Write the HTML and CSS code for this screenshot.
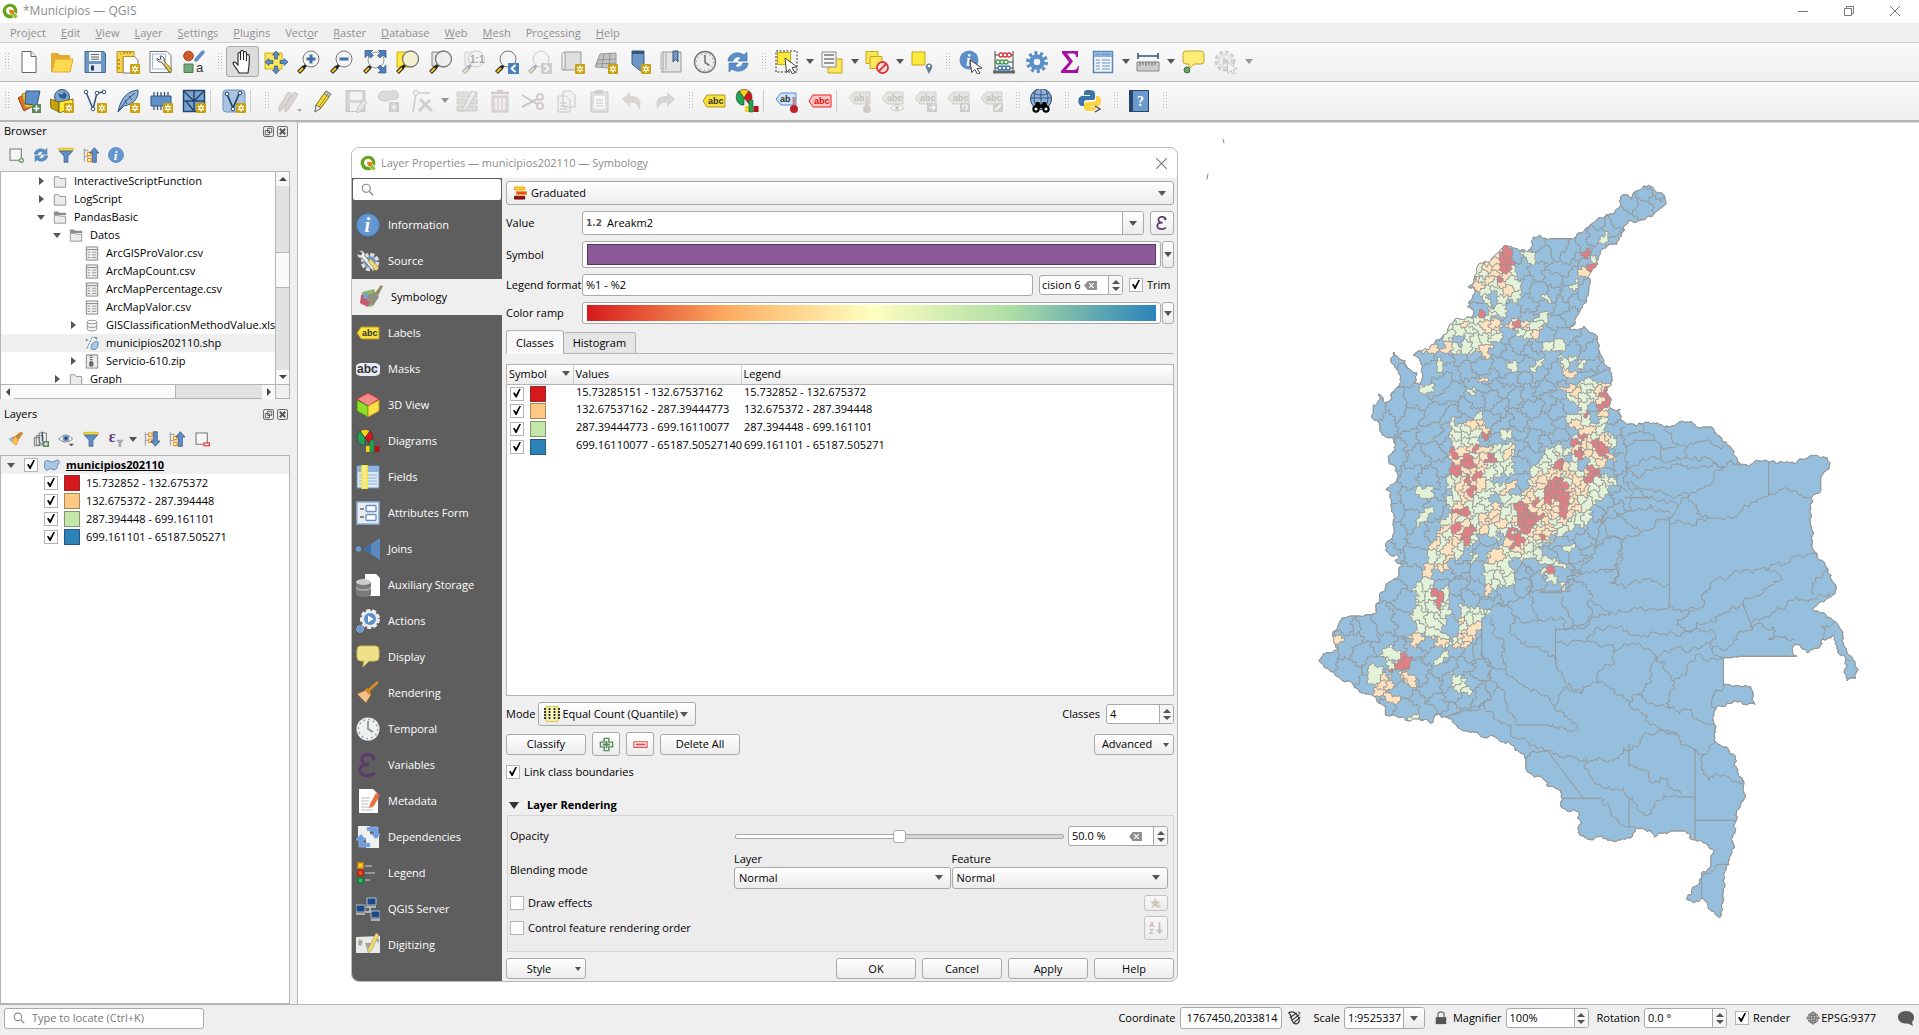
FILE: index.html
```html
<!DOCTYPE html>
<html lang="en">
<head>
<meta charset="utf-8">
<title>*Municipios — QGIS</title>
<link rel="stylesheet" href="styles.css">
</head>
<body>
<svg class="defs" aria-hidden="true">
<defs>
<g id="star"><rect x="14" y="14" width="10" height="10" rx="1" fill="#c8a20c"/><path d="M19 15.500v7M16 17.200l6 3.600M22 17.200l-6 3.600" stroke="#fff" stroke-width="1.500"/><circle cx="19" cy="19" r="1" fill="#c8a20c"/></g>
<g id="lens"><path d="M9 15l-3 3" stroke="#222" stroke-width="3"/><path d="M7 17l-5.500 5.500" stroke="#222" stroke-width="4"/><path d="M6 18l-4 4" stroke="#f6c21c" stroke-width="2.200"/></g>
<symbol id="qgis" viewBox="0 0 24 24"><path d="M12 1a11 11 0 1 0 5 20.800l-3.500-4.300A6 6 0 1 1 18 12.500l4 4A11 11 0 0 0 12 1z" fill="#66a41c"/><path d="M11 11l4 0 8.500 9-3.500 3.500-8-8z" fill="#97c13c"/><path d="M11 10h5l3 4-4 3-4-3z" fill="#ee7913"/></symbol>
<symbol id="new" viewBox="0 0 24 24"><path d="M5 1.500h9l5 5v16H5z" fill="#fff" stroke="#666"/><path d="M14 1.500v5h5" fill="#eee" stroke="#666"/></symbol>
<symbol id="open" viewBox="0 0 24 24"><path d="M1 3h7l2 2h10v17H1z" fill="#e3ab30"/><path d="M5 9h18l-3 13H2z" fill="#ffd94f" stroke="#e0a82f"/></symbol>
<symbol id="save" viewBox="0 0 24 24"><path d="M2 1.500h19l1.500 2v19H2z" fill="#6d97c4" stroke="#456a94"/><path d="M6 2h12v9H6z" fill="#f3f3f3"/><path d="M8 4.500h8M8 7h8M8 9.200h8" stroke="#666"/><path d="M6 14h12v8H6z" fill="#e4e9ee"/><path d="M8 15.500h3v5H8z" fill="#1f3e63"/></symbol>
<symbol id="layout" viewBox="0 0 24 24"><path d="M7 6h11l4 4v13H7z" fill="#fff" stroke="#777"/><path d="M1 1.500h17v5H7v16H1z" fill="#f8d24c" stroke="#b8941f"/><path d="M4 4h1M8 2v2M11 2v2M14 2v2M1 10h3M1 14h3M1 18h3" stroke="#8a6d10"/><use href="#star"/></symbol>
<symbol id="manager" viewBox="0 0 24 24"><path d="M1 1.500h17l4 4v17H1z" fill="#fff" stroke="#777"/><path d="M3.500 4h13v15h-13z" fill="#fff" stroke="#9ab8dd"/><path d="M8 8c0 4 3 4.500 4.500 4L20 22l3-2-8-9c1-3-1-5-4-5l1 3-2 1z" fill="#e9e9e9" stroke="#555"/><path d="M15 14l6 8 2-1.500-6-8z" fill="#e4c542" stroke="#9b8216" stroke-width=".6"/></symbol>
<symbol id="styles" viewBox="0 0 24 24"><circle cx="6.500" cy="6" r="4.800" fill="#d15b2e" stroke="#a8421b"/><path d="M14 10l7-8" stroke="#5f8cc0" stroke-width="3.500" stroke-linecap="round"/><path d="M2 14h9v8.500H2z" fill="#72a878" stroke="#4a7d50"/><text x="14" y="22" font-size="13" fill="#333">a</text></symbol>
<symbol id="hand" viewBox="0 0 24 24"><path d="M8 23c-1-4-6-7-6-10 1.500-2 3 0 5 2V4c0-2 2.500-2 2.500 0v6-8c0-2 3-2 3 0v8-7c0-2 3-2 3 0v8-5c0-2 2.800-2 2.800 0C18.500 13 18 18 17 23z" fill="#fff" stroke="#222" stroke-width="1.100"/></symbol>
<symbol id="pansel" viewBox="0 0 24 24"><path d="M1 3h17v16H1z" fill="#fbe75c" stroke="#cfae0c"/><path d="M12 1l3.500 4h-2v4h-3V5h-2zM12 24l3.500-4h-2v-4h-3v4h-2zM1 12l4-3.500v2h4v3H5v2zM24 12l-4-3.500v2h-4v3h4v2z" fill="#5d8fc6" stroke="#2c517e" stroke-width=".7"/></symbol>
<symbol id="zin" viewBox="0 0 24 24"><use href="#lens"/><circle cx="14" cy="9" r="8" fill="#f4f4f2" stroke="#777"/><path d="M14 4.500v9M9.500 9h9" stroke="#3d6ea8" stroke-width="3"/></symbol>
<symbol id="zout" viewBox="0 0 24 24"><use href="#lens"/><circle cx="14" cy="9" r="8" fill="#f4f4f2" stroke="#777"/><path d="M9.500 9h9" stroke="#3d6ea8" stroke-width="3"/></symbol>
<symbol id="zfull" viewBox="0 0 24 24"><use href="#lens"/><circle cx="13" cy="10" r="8" fill="#f4f4f2" stroke="#999"/><path d="M2 0h8L7.500 2.500l3 3-3 2.500-3-3L2 8zM23 0h-8l2.500 2.500-3 3L17 8l3-3 3 3zM23 23h-8l2.500-2.500-3-3L17 15l3 3 3-3z" fill="#4b7fba" stroke="#2c517e" stroke-width=".6"/></symbol>
<symbol id="zsel" viewBox="0 0 24 24"><path d="M1 2h12v15H1z" fill="#fde93b" stroke="#cfae0c"/><use href="#lens"/><circle cx="14.500" cy="9" r="8" fill="#f5f0cf" stroke="#777" stroke-width="1.300"/></symbol>
<symbol id="zlay" viewBox="0 0 24 24"><path d="M3 2h10v14H3z" fill="#e3e3e3" stroke="#888"/><use href="#lens"/><circle cx="14.500" cy="9" r="8" fill="#eee" fill-opacity=".9" stroke="#777" stroke-width="1.300"/></symbol>
<symbol id="znat" viewBox="0 0 24 24"><path d="M3 2h10v14H3z" fill="#e3e3e3" stroke="#888"/><use href="#lens"/><circle cx="14.500" cy="9" r="8" fill="#eee" stroke="#777"/><text x="8" y="13" font-size="10" font-weight="700">1:1</text></symbol>
<symbol id="zlast" viewBox="0 0 24 24"><use href="#lens"/><circle cx="13" cy="9" r="8" fill="#f4f4f2" stroke="#777"/><path d="M13 13h11v11H13z" fill="#4b7fba"/><path d="M20.500 15l-4 3.500 4 3.500" fill="none" stroke="#fff" stroke-width="1.800"/></symbol>
<symbol id="znext" viewBox="0 0 24 24"><use href="#lens"/><circle cx="13" cy="9" r="8" fill="#f4f4f2" stroke="#777"/><path d="M13 13h11v11H13z" fill="#888"/><path d="M16.500 15l4 3.500-4 3.500" fill="none" stroke="#fff" stroke-width="1.800"/></symbol>
<symbol id="nmap" viewBox="0 0 24 24"><path d="M4 2h16v18H2c2 0 2-1 2-3z" fill="#dedede" stroke="#999"/><path d="M4 2c-3 0-3 2-3 3v15" fill="none" stroke="#999"/><use href="#star"/></symbol>
<symbol id="n3d" viewBox="0 0 24 24"><path d="M6 4l16-1v13l-7 2-14-1z" fill="#c4c4c4" stroke="#999"/><path d="M4 10l18-1M10 4L8 17M16 3l-1 14M2 14l20-1" fill="none" stroke="#888" stroke-width=".8"/><use href="#star"/></symbol>
<symbol id="bookn" viewBox="0 0 24 24"><path d="M5 1h12v22l-6-4-6-5z" fill="#6d97c4" stroke="#3c5f88"/><path d="M5 1h12v3H5z" fill="#37557a"/><use href="#star"/></symbol>
<symbol id="book" viewBox="0 0 24 24"><path d="M3 2h18v20H1c2-1 2-1 2-3z" fill="#e4e4e4" stroke="#999"/><path d="M3 2C1 2 1 4 1 6v14M6 2v18" fill="none" stroke="#aaa"/><path d="M13 1h5v11l-2.500-3L13 12z" fill="#6d97c4" stroke="#37557a"/></symbol>
<symbol id="clock" viewBox="0 0 24 24"><circle cx="12" cy="12" r="10.500" fill="#ededed" stroke="#777" stroke-width="1.400"/><circle cx="12" cy="12" r="8.500" fill="none" stroke="#888" stroke-width="1.200" stroke-dasharray="1 3.450"/><path d="M12 5v7.500l4.500 3" fill="none" stroke="#777" stroke-width="1.600"/></symbol>
<symbol id="refresh" viewBox="0 0 24 24"><path d="M2 11C2 4 12 0 18 5l3-3v9h-9l3-3c-4-3-7 0-8 3zM22 13c0 7-10 11-16 6l-3 3v-9h9l-3 3c4 3 7 0 8-3z" fill="#5a8fc8" stroke="#3a6ca3" stroke-width=".6"/></symbol>
<symbol id="sel" viewBox="0 0 24 24"><path d="M1 1h21v21H1z" fill="none" stroke="#333" stroke-dasharray="2 1.500"/><path d="M2.500 2.500h13v12h-13z" fill="#fbe93b" stroke="#c9a70c"/><path d="M10 8l12 9-5 .5 3 5-2.500 1.500-3-5-3 3.500z" fill="#fff" stroke="#444"/></symbol>
<symbol id="self" viewBox="0 0 24 24"><path d="M8 9h14v14H8z" fill="#fbe75c" stroke="#c9a70c"/><path d="M2 2h14v15H2z" fill="#f6f6f6" stroke="#888"/><path d="M4 5h10M4 9h10M4 13h10" stroke="#777" stroke-width="1.500"/></symbol>
<symbol id="desel" viewBox="0 0 24 24"><path d="M1 1.500h12v12H1z" fill="#fbe75c" stroke="#c9a70c"/><path d="M5 6.500h12v12H5z" fill="#fbe75c" stroke="#c9a70c"/><circle cx="17.500" cy="17.500" r="5.500" fill="#fbe0e0" stroke="#d9363c" stroke-width="1.800"/><path d="M14 21l7-7" stroke="#d9363c" stroke-width="1.800"/></symbol>
<symbol id="selloc" viewBox="0 0 24 24"><path d="M2 2h13v13H2z" fill="#fbe93b" stroke="#c9a70c"/><path d="M19 24l-3-6c-2-6 8-6 6 0z" fill="#5f7f9c"/><circle cx="19" cy="16" r="1.300" fill="#fff"/></symbol>
<symbol id="ident" viewBox="0 0 24 24"><circle cx="10" cy="10" r="9.500" fill="#5f8fc8"/><text x="7" y="16" font-size="16" font-weight="700" font-style="italic" fill="#fff" class="serif">i</text><path d="M11 10l12 8-5 .5 3 4.500-2.300 1.300-3-5-3 3.300z" fill="#fff" stroke="#444"/></symbol>
<symbol id="abacus" viewBox="0 0 24 24"><path d="M3 1v20M21 1v20M3 5h18M3 12h18M3 18h18" stroke="#444"/><path d="M1 22h22" stroke="#666" stroke-width="3"/><g fill="#fff" stroke-width="1.300"><g stroke="#d9363c"><circle cx="9" cy="5" r="2"/><circle cx="13" cy="5" r="2"/><circle cx="17" cy="5" r="2"/></g><g stroke="#469a50"><circle cx="6" cy="12" r="2"/><circle cx="10" cy="12" r="2"/><circle cx="14" cy="12" r="2"/></g><g stroke="#3d74b5"><circle cx="8" cy="18" r="2"/><circle cx="12" cy="18" r="2"/><circle cx="16" cy="18" r="2"/></g></g></symbol>
<symbol id="gear" viewBox="0 0 24 24"><circle cx="12" cy="12" r="9" fill="none" stroke="#5a8fc8" stroke-width="4" stroke-dasharray="3 2.650"/><circle cx="12" cy="12" r="5.500" fill="none" stroke="#5a8fc8" stroke-width="4.500"/></symbol>
<symbol id="sigma" viewBox="0 0 24 24"><path d="M4 1h16v6h-2c0-3-1-3.500-4-3.500H9l6 8L8 20h7c3 0 4-1 5-4h1l-1 7H3v-2l8-9-7-9z" fill="#a50fa5"/></symbol>
<symbol id="table" viewBox="0 0 24 24"><path d="M2.500 1.500h19v21h-19z" fill="#f0f4f8" stroke="#5c88b8" stroke-width="1.500"/><path d="M3 2h18v5H3z" fill="#8db3dc"/><path d="M5 4.500h4M11 4.500h8M5 10h4M11 10h8M5 13h4M11 13h8M5 16h4M11 16h8M5 19h4M11 19h8" stroke="#6b94c2"/></symbol>
<symbol id="measure" viewBox="0 0 24 24"><path d="M2 6h20M2 3v6M22 3v6" stroke="#37557a" stroke-width="1.500"/><path d="M1 12h22v9H1z" fill="#ccc" stroke="#888"/><path d="M4 12v4M7 12v3M10 12v4M13 12v3M16 12v4M19 12v3" stroke="#666"/></symbol>
<symbol id="tip" viewBox="0 0 24 24"><path d="M5 1h15q3 0 3 3v7q0 3-3 3h-7l-5 5v-5H5q-3 0-3-3V4q0-3 3-3z" fill="#fdec75" stroke="#c2a52b"/><circle cx="6" cy="20" r="3" fill="#6da06f" stroke="#3f7142"/></symbol>
<symbol id="run" viewBox="0 0 24 24"><circle cx="11" cy="11" r="9" fill="none" stroke="#888" stroke-width="3" stroke-dasharray="4 2"/><circle cx="11" cy="11" r="6.500" fill="#ddd" stroke="#888"/><path d="M9 7l6 4-6 4z" fill="#888"/><path d="M13 12l10 7-4 .5 2 4-2 1-2-4-3 3z" fill="#fff" stroke="#666"/></symbol>
<symbol id="dsm" viewBox="0 0 24 24"><path d="M1 9l9-5 6 13-9 5z" fill="#df6a2c" stroke="#a8421b"/><path d="M5 5l10-2 3 14-10 2z" fill="#f1c52e" stroke="#b08c14"/><path d="M9 2l14 0-3 14-12-1z" fill="#5f8fc8" stroke="#37557a"/><path d="M15 15h9v9h-9z" fill="#578a5c"/><path d="M19.500 16.500v6M16.500 19.500h6" stroke="#fff" stroke-width="1.600"/></symbol>
<symbol id="gpkg" viewBox="0 0 24 24"><circle cx="12" cy="8" r="7.500" fill="#7ba3d0" stroke="#37557a"/><path d="M8 4l4 2 2-3 3 3-2 4-5-1z" fill="#2f5a8c"/><path d="M0 10l9 3v10l-8-4z" fill="#c8a20c" stroke="#6b5605" stroke-width=".8"/><path d="M9 13l14-3v9l-14 5z" fill="#fbe93b" stroke="#6b5605" stroke-width=".8"/><use href="#star"/></symbol>
<symbol id="shp" viewBox="0 0 24 24"><path d="M3 3l7 17 4-16 7-1" fill="none" stroke="#37557a" stroke-width="1.500"/><g fill="#fff" stroke="#37557a"><circle cx="3" cy="3" r="1.800"/><circle cx="10" cy="20" r="1.800"/><circle cx="14" cy="4" r="1.800"/><circle cx="21" cy="3" r="1.800"/></g><use href="#star"/></symbol>
<symbol id="feather" viewBox="0 0 24 24"><path d="M2 23C5 8 12 2 22 1c1 9-5 14-14 16z" fill="#8fb2da" stroke="#37557a"/><path d="M2 23C7 15 12 9 19 4M9 11l2 4M13 7l3 4" fill="none" stroke="#37557a"/><use href="#star"/></symbol>
<symbol id="chip" viewBox="0 0 24 24"><path d="M5 3v18M8.500 3v18M12 3v18M15.500 3v18M19 3v18" stroke="#37557a" stroke-width="1.300"/><path d="M2 7h20v10H2z" fill="#5f8fc8" stroke="#37557a"/><use href="#star"/></symbol>
<symbol id="mesh" viewBox="0 0 24 24"><path d="M1.500 1.500h21v21h-21z" fill="#7ba3d0" stroke="#26456b" stroke-width="1.500"/><path d="M1.500 12h21M12 1.500v21M1.500 2L12 12 22 2M4 12l8 10" fill="none" stroke="#26456b" stroke-width="1.500"/><use href="#star"/></symbol>
<symbol id="virt" viewBox="0 0 24 24"><rect x="1" y="1" width="22" height="22" rx="3" fill="#a9c4e2" stroke="#6d93bd"/><path d="M5 5l6 14 6-14" fill="none" stroke="#26456b" stroke-width="1.800"/><g fill="#fff" stroke="#26456b"><circle cx="5" cy="5" r="1.800"/><circle cx="11" cy="20" r="1.800"/><circle cx="18" cy="4" r="1.800"/></g><use href="#star"/></symbol>
<symbol id="pencil" viewBox="0 0 24 24"><path d="M5 16L15 2l5 3-10 14-6 4z" fill="#f2da3c" stroke="#7d6b10"/><path d="M5 16l5 3-6 4z" fill="#eee" stroke="#555" stroke-width=".7"/><path d="M15 2l5 3-2 3-5-3z" fill="#bbb" stroke="#777" stroke-width=".6"/><path d="M17 5L8 18" stroke="#a08c1c"/></symbol>
<symbol id="pencils" viewBox="0 0 24 24"><path d="M1 18L10 3l4 2-9 15-4 3zM7 18l9-15 4 2-9 15-4 3z" fill="#b49a8f" stroke="#777"/><path d="M19 20h5l-2.500 3z" fill="#222"/></symbol>
<symbol id="savee" viewBox="0 0 24 24"><path d="M2 1.500h19v21H2z" fill="#999" stroke="#777"/><path d="M6 3h12v8H6zM6 14h10v8H6z" fill="#eee"/><path d="M13 20l6-9 4 2-6 9-4 2z" fill="#ccc" stroke="#777"/></symbol>
<symbol id="blob" viewBox="0 0 24 24"><path d="M2 5c3-5 8-1 12-3 5-2 9 3 7 7-2 3-5 0-9 2-5 3-13 0-10-6z" fill="#aaa" stroke="#777"/><rect x="12" y="13" width="10" height="10" fill="#888"/><path d="M17 14v8M14 16l6 4M20 16l-6 4" stroke="#fff"/></symbol>
<symbol id="vertex" viewBox="0 0 24 24"><path d="M3 23L6 4M6 4h14" stroke="#777" stroke-width="1.500"/><circle cx="6" cy="4" r="2.500" fill="#eee" stroke="#777"/><path d="M9 22l11-11M10 10l12 12" stroke="#998f77" stroke-width="3"/></symbol>
<symbol id="multi" viewBox="0 0 24 24"><path d="M2 3h20v5H2zM2 10h20v5H2zM2 17h20v5H2z" fill="#b9b98f" stroke="#888"/><path d="M8 19L17 2l4 2-9 16-5 3z" fill="#ddd" stroke="#777"/></symbol>
<symbol id="trash" viewBox="0 0 24 24"><path d="M3 4h18M9 2h6" stroke="#a77" stroke-width="2.500"/><path d="M4 7h16v16H4z" fill="#c9a0a0" stroke="#a77"/><path d="M8 9v12M12 9v12M16 9v12" stroke="#fff" stroke-width="1.500"/></symbol>
<symbol id="cut" viewBox="0 0 24 24"><path d="M1 6l15 9M1 18l15-8" stroke="#777" stroke-width="2"/><circle cx="19" cy="8" r="3" fill="none" stroke="#a77" stroke-width="2"/><circle cx="19" cy="17" r="3" fill="none" stroke="#a77" stroke-width="2"/></symbol>
<symbol id="copy" viewBox="0 0 24 24"><path d="M9 2h8l4 4v12H9zM4 7h8l4 4v12H4z" fill="#eee" stroke="#777"/><path d="M6 14h7M6 17h7M6 20h7" stroke="#777"/></symbol>
<symbol id="paste" viewBox="0 0 24 24"><path d="M4 3h17v20H4z" fill="#bbb" stroke="#777"/><path d="M7 7h11v13H7z" fill="#fff"/><path d="M8 1h8v4H8z" fill="#888"/><path d="M9 11h7M9 14h7M9 17h7" stroke="#777"/></symbol>
<symbol id="undo" viewBox="0 0 24 24"><path d="M2 10l8-7v4c9-1 13 5 9 14-1-6-4-8-9-7v4z" fill="#b49a8f"/></symbol>
<symbol id="redo" viewBox="0 0 24 24"><path d="M22 10l-8-7v4C5 6 1 12 5 21c1-6 4-8 9-7v4z" fill="#9a9f93"/></symbol>
<symbol id="abc" viewBox="0 0 24 24"><path d="M1 12l4-6h18v12H5z" fill="#f7e23d" stroke="#b8941f"/><text x="6" y="15" font-size="9" font-weight="700" fill="#333">abc</text></symbol>
<symbol id="abcr" viewBox="0 0 24 24"><path d="M1 12l4-6h18v12H5z" fill="#ffc4c4" stroke="#e22"/><text x="6" y="15" font-size="9" font-weight="700" fill="#d11">abc</text></symbol>
<symbol id="abt" viewBox="0 0 24 24"><path d="M1 10l5-6h15v12H6z" fill="#cfe3fa" stroke="#4b8fd8"/><text x="5" y="13" font-size="9" font-weight="700" fill="#333">ab</text><path d="M19 8v10" stroke="#b88" stroke-width="3"/><circle cx="19" cy="20" r="4" fill="#b8242a"/></symbol>
<symbol id="lab" viewBox="0 0 24 24"><path d="M1 9l5-6h16v12H6z" fill="#c9c9a8" stroke="#888"/><text x="6" y="12" font-size="9" font-weight="700" fill="#555">ab</text><path d="M19 7v11" stroke="#a88" stroke-width="3"/><circle cx="19" cy="20" r="4" fill="#a77"/></symbol>
<symbol id="labr" viewBox="0 0 24 24"><path d="M1 9l5-6h16v12H6z" fill="#c9c9a8" stroke="#888"/><text x="6" y="12" font-size="9" font-weight="700" fill="#555">abc</text><path d="M13 14h10v9H13z" fill="#888"/><path d="M16 20c-2-5 6-5 4-1l-2 2" fill="none" stroke="#fff" stroke-width="1.500"/></symbol>
<symbol id="labc" viewBox="0 0 24 24"><path d="M1 9l5-6h16v12H6z" fill="#c9c9a8" stroke="#888"/><text x="6" y="12" font-size="9" font-weight="700" fill="#555">abc</text><path d="M13 14h10v9H13z" fill="#998f77"/><path d="M15 21l6-5" stroke="#fff" stroke-width="2"/></symbol>
<symbol id="labs" viewBox="0 0 24 24"><path d="M1 9l5-6h16v12H6z" fill="#c9c9a8" stroke="#888"/><text x="6" y="12" font-size="9" font-weight="700" fill="#555">abc</text><path d="M13 14h10v9H13z" fill="#888"/><path d="M15 18.500h6M18.500 16l2.500 2.500-2.500 2.500" fill="none" stroke="#fff" stroke-width="1.500"/></symbol>
<symbol id="labe" viewBox="0 0 24 24"><path d="M1 9l5-6h16v12H6z" fill="#c9c9a8" stroke="#888"/><text x="6" y="12" font-size="9" font-weight="700" fill="#555">abc</text><path d="M9 19q7-7 14 0-7 6-14 0z" fill="#fff" stroke="#777"/><circle cx="16" cy="19" r="2" fill="#777"/></symbol>
<symbol id="diag" viewBox="0 0 24 24"><path d="M9 9L4 2a9 9 0 0 1 10 0z" fill="#f6d01c" stroke="#333" stroke-width=".6"/><path d="M9 9l5-7c4 3 4 9 0 13z" fill="#d3191c" stroke="#333" stroke-width=".6"/><path d="M9 9L4 2c-4 3-4 11 2 14l3 0z" fill="#1fa555" stroke="#333" stroke-width=".6"/><path d="M10 17h4v6h-4z" fill="#f6d01c"/><path d="M14 11h4v12h-4z" fill="#1fa555" stroke="#0d6e35" stroke-width=".6"/><path d="M18.500 17h5v6h-5z" fill="#b31217"/></symbol>
<symbol id="meta" viewBox="0 0 24 24"><circle cx="12" cy="10" r="10.500" fill="#8fb2da" stroke="#26456b"/><path d="M2 9h20M12 0v17M4 4q8 4 16 0M7 1q-4 8 0 16M17 1q4 8 0 16" fill="none" stroke="#26456b" stroke-width=".8"/><circle cx="7" cy="20" r="3.700"/><circle cx="17" cy="20" r="3.700"/><path d="M7 13h3l2 3 2-3h3l2 6H5z"/><circle cx="7" cy="20" r="1.500" fill="#fff"/><circle cx="17" cy="20" r="1.500" fill="#fff"/></symbol>
<symbol id="python" viewBox="0 0 24 24"><path d="M11 1c-5 0-5 1-5 5h6v1H4c-5 0-5 9 0 10h2v-3c0-3 2-3 4-3h5c2 0 2-2 2-3V5c0-3-2-4-6-4z" fill="#3d74a8"/><path d="M12 22c5 0 6-1 6-4h-6v-1h8c4-1 4-9 0-10h-2v3c0 3-2 3-4 3H9c-2 0-3 2-3 3v3c0 2 2 3 6 3z" fill="#fcd33f"/><path d="M17 17l5 3-5 3" fill="none" stroke="#444" stroke-width="1.300"/></symbol>
<symbol id="help" viewBox="0 0 24 24"><path d="M2 1h20v22H2z" fill="#26456b"/><path d="M6 2h15v20H6z" fill="#6b99cd"/><text x="10" y="17" font-size="14" font-weight="700" fill="#fff" class="serif">?</text></symbol>
<symbol id="addlay" viewBox="0 0 24 24"><path d="M3 3h17v17H3z" fill="#f6f6f6" stroke="#777" stroke-width="1.600"/><circle cx="20" cy="20" r="4" fill="#6da06f"/><circle cx="20" cy="20" r="1.800" fill="#fff"/></symbol>
<symbol id="remlay" viewBox="0 0 24 24"><path d="M3 3h17v17H3z" fill="#f6f6f6" stroke="#777" stroke-width="1.600"/><path d="M14 17h10v6H14z" fill="#e6484c"/><path d="M16 20h6" stroke="#fff" stroke-width="2"/></symbol>
<symbol id="filter" viewBox="0 0 24 24"><path d="M1 2h22v3H1z" fill="#f7e23d" stroke="#c9a70c"/><path d="M2 6h20l-7 8v9h-6v-9z" fill="#5f8fc8" stroke="#37557a"/></symbol>
<symbol id="coll" viewBox="0 0 24 24"><path d="M2 2v20M2 5h6M2 14h6" stroke="#999" stroke-width="1.500"/><path d="M7 8h5v5H7zM7 17h5v5H7z" fill="#fff" stroke="#ee9313" stroke-width="1.800"/><path d="M17 1l7 8h-4v14h-6V9h-4z" fill="#5f8fc8" stroke="#26456b"/></symbol>
<symbol id="expd" viewBox="0 0 24 24"><path d="M2 2v20M2 5h6M2 14h6" stroke="#999" stroke-width="1.500"/><path d="M7 3h5v5H7zM7 12h5v5H7z" fill="#fff" stroke="#ee9313" stroke-width="1.800"/><path d="M17 23l7-8h-4V1h-6v14h-4z" fill="#5f8fc8" stroke="#26456b"/></symbol>
<symbol id="info" viewBox="0 0 24 24"><circle cx="12" cy="12" r="11.300" fill="#6496d2" stroke="#4a7cb8"/><text x="8.500" y="19" font-size="20" font-weight="700" font-style="italic" fill="#fff" class="serif">i</text></symbol>
<symbol id="brush" viewBox="0 0 24 24"><path d="M1 12l9-4 6 6-4 8z" fill="#ee6e4b"/><path d="M5 14l7-5 3 7-4 5z" fill="#f7c63d"/><path d="M1 12l5-3 2 8z" fill="#79c9ea"/><path d="M10 8l9-7 4 2-7 10z" fill="#c98a31"/></symbol>
<symbol id="group" viewBox="0 0 24 24"><path d="M9 3h11v15H9zM5 7h10v14H5zM2 10h8v12H2z" fill="#f3f3f3" stroke="#666" stroke-width="1.300"/><path d="M14 1v14" stroke="#37557a" stroke-width="2"/><path d="M15 15h9v9h-9z" fill="#578a5c"/><path d="M19.500 16.500v6M16.500 19.500h6" stroke="#fff" stroke-width="1.600"/></symbol>
<symbol id="eye" viewBox="0 0 24 24"><path d="M1 12q11-12 21 0-10 9-21 0z" fill="#fff" stroke="#888" stroke-width="1.500"/><circle cx="12" cy="11" r="5" fill="#6d97c4"/><circle cx="12" cy="11" r="2" fill="#234"/><path d="M16 19h8l-4 4z" fill="#555"/></symbol>
<symbol id="efil" viewBox="0 0 24 24"><text x="1" y="16" font-size="24" font-weight="700" fill="#6b3f7c" class="serif">ε</text><path d="M12 13h12l-4 5v6h-4v-6z" fill="#aaa"/></symbol>
<symbol id="folder" viewBox="0 0 16 16"><path d="M1.500 3V14.500h13V4.500H8L6.500 2.500h-5z" fill="#ececec" stroke="#8d8d8d"/></symbol>
<symbol id="foldero" viewBox="0 0 16 16"><path d="M1 1h5l1 1.500h8V5H1z" fill="#8d8d8d"/><path d="M1.500 5.500v9h13v-8H8L6.500 5.500z" fill="#ececec" stroke="#8d8d8d"/></symbol>
<symbol id="csv" viewBox="0 0 16 16"><path d="M1.500 .5h13v15h-13z" fill="#f2f2f2" stroke="#777"/><path d="M2 3.500h12" stroke="#777"/><path d="M3 6.500h3M8 6.500h5M3 9.500h3M8 9.500h5M3 12.500h3M8 12.500h5" stroke="#888"/></symbol>
<symbol id="db" viewBox="0 0 16 16"><path d="M2.500 4v8c0 3 11 3 11 0V4" fill="#f1f1f1" stroke="#888"/><ellipse cx="8" cy="4" rx="5.500" ry="2" fill="#fff" stroke="#888"/><path d="M2.500 8c0 3 11 3 11 0" fill="none" stroke="#888"/></symbol>
<symbol id="vec" viewBox="0 0 16 16"><path d="M2 14L8 1h5" fill="none" stroke="#5b83ae" stroke-dasharray="3 1"/><path d="M7 12c0-5 8-9 8-5s-1 8-5 8-3-2-3-3z" fill="#a9c8e6" stroke="#5b83ae"/><circle cx="2" cy="4" r="1.200" fill="#5b83ae"/><circle cx="13" cy="2" r="1.200" fill="#5b83ae"/></symbol>
<symbol id="zip" viewBox="0 0 16 16"><path d="M1.500 .5h13v15h-13z" fill="#eee" stroke="#777"/><path d="M7 1v7" stroke="#444" stroke-width="3" stroke-dasharray="1 1"/><path d="M5.500 9h3.500v4H5.500z" fill="#888" stroke="#333"/></symbol>
<symbol id="poly" viewBox="0 0 18 14"><path d="M1 3c2-4 5 0 8 0s6-4 8-1c1 4-2 3-2 6s-3 5-6 3-5 3-7 1C0 9 0 6 1 3z" fill="#a9c8e6" stroke="#5b83ae"/></symbol>
<symbol id="float" viewBox="0 0 12 12"><rect x=".5" y=".5" width="11" height="11" rx="2" fill="none" stroke="#555"/><path d="M5 2.500h4.500V7H5zM2.500 5H7v4.500H2.500z" fill="#eee" stroke="#555"/></symbol>
<symbol id="shut" viewBox="0 0 12 12"><rect x=".5" y=".5" width="11" height="11" rx="2" fill="none" stroke="#555"/><path d="M3 3l6 6M9 3L3 9" stroke="#555" stroke-width="2.200"/></symbol>
<symbol id="mag" viewBox="0 0 16 16"><circle cx="6.500" cy="6.500" r="5" fill="none" stroke="#888" stroke-width="1.400"/><path d="M10.500 10.500l4.500 4.500" stroke="#888" stroke-width="1.600"/></symbol>
<symbol id="source" viewBox="0 0 24 24"><circle cx="14" cy="13" r="7" fill="#6d97c4"/><circle cx="14" cy="13" r="7.500" fill="none" stroke="#ddd" stroke-width="3.500" stroke-dasharray="4 1.900"/><path d="M1 3c3-3 9-1 8 4l10 11-3 3L6 9C3 10 1 7 1 5l4 1 1-2-3-2z" fill="#e9e9e9" stroke="#555" stroke-width=".6"/><path d="M12 12l3-2 8 9-3 3z" fill="#ecd97a" stroke="#8d7b2b" stroke-width=".6"/></symbol>
<symbol id="symb" viewBox="0 0 24 24"><path d="M3 7l12-3 3 8-6 10-10-3z" fill="#8db56a"/><path d="M2 10l7 0 3 6-3 6-8-4z" fill="#c95a74"/><path d="M4 9l5-1 2 5-6 1z" fill="#6fa8cc"/><path d="M9 10l7-3 4 5-6 9-6-6z" fill="#8f9080"/><path d="M16 8l6-8 2 1-5 10z" fill="#9a8a62"/></symbol>
<symbol id="masks" viewBox="0 0 24 24"><rect x="-1" y="6" width="26" height="13" rx="6" fill="#e7e9f5"/><text x="1" y="16" font-size="12" font-weight="700" fill="#333">abc</text></symbol>
<symbol id="cube" viewBox="0 0 24 24"><path d="M12 0l11 6-11 7L1 6z" fill="#f58c8c" stroke="#c33"/><path d="M1 7l11 6v11L1 18z" fill="#8ee02d" stroke="#4a8a10"/><path d="M23 7l-11 6v11l11-6z" fill="#fbe04a" stroke="#b8941f"/></symbol>
<symbol id="fields" viewBox="0 0 24 24"><path d="M1 1h22v22H1z" fill="#dfe8f1" stroke="#6b94c2"/><path d="M1 1h22v6H1z" fill="#8db3dc"/><path d="M3 10h18M3 13h18M3 16h18M3 19h18" stroke="#8db3dc"/><path d="M6 0h5v24H6z" fill="#f6e89a" stroke="#f9ec2b" stroke-width="1.500"/></symbol>
<symbol id="form" viewBox="0 0 24 24"><path d="M1 1h22v22H1z" fill="#e9edf2" stroke="#8db3dc" stroke-width="1.500"/><path d="M4 8h4M4 16h4" stroke="#666" stroke-width="1.500"/><rect x="10" y="4.500" width="10" height="6" rx="1" fill="#fff" stroke="#6b94c2" stroke-width="1.400"/><rect x="10" y="13.500" width="10" height="6" rx="1" fill="#fff" stroke="#6b94c2" stroke-width="1.400"/></symbol>
<symbol id="joins" viewBox="0 0 24 24"><circle cx="2.500" cy="12" r="2.700" fill="#6b99cd"/><path d="M7 12L24 1v22z" fill="#5a8ac0"/><path d="M7 12L15 7v10z" fill="#3f6da3"/></symbol>
<symbol id="aux" viewBox="0 0 24 24"><path d="M9 1h11l4 4v18H9z" fill="#fff"/><path d="M0 9v12c0 4 15 4 15 0V9z" fill="#7a7a7a"/><ellipse cx="7.500" cy="9" rx="7.500" ry="3" fill="#ccc"/><path d="M0 14c0 4 15 4 15 0" fill="none" stroke="#ccc"/></symbol>
<symbol id="act" viewBox="0 0 24 24"><circle cx="14" cy="10" r="8.500" fill="#dfe6ee" stroke="#eee" stroke-width="3" stroke-dasharray="4 2"/><circle cx="14" cy="10" r="6" fill="#5f8fc8"/><path d="M12 6.500l5.500 3.500-5.500 3.500z" fill="#fff"/><circle cx="4" cy="20" r="3.500" fill="#6b99cd" stroke="#9fc0e6" stroke-dasharray="1.500 1"/></symbol>
<symbol id="disp" viewBox="0 0 24 24"><path d="M5 1h14q4 0 4 4v7q0 4-4 4h-6l-6 6 1-6H5q-4 0-4-4V5q0-4 4-4z" fill="#efe18a" stroke="#d1bd52"/></symbol>
<symbol id="rend" viewBox="0 0 24 24"><path d="M1 13l9-4 5 5-5 8z" fill="#eec38d" stroke="#a8702a"/><path d="M10 8l4 5M12 10l10-9" stroke="#d88a26" stroke-width="3"/></symbol>
<symbol id="temp" viewBox="0 0 24 24"><circle cx="12" cy="12" r="11.500" fill="#eef0ee"/><circle cx="12" cy="12" r="9.500" fill="none" stroke="#6b94c2" stroke-width="1.500" stroke-dasharray="1.500 3.470"/><path d="M12 4v8l5 3" fill="none" stroke="#888" stroke-width="1.600"/></symbol>
<symbol id="eps" viewBox="0 0 24 24"><path d="M18 4C12-1 5 2 6 7c0 3 3 4.500 7 4.500C7 11.500 4 13 4 17c0 6 10 7 15 3" fill="none" stroke="#5d3b6c" stroke-width="3"/><circle cx="17.500" cy="5" r="2.200" fill="#5d3b6c"/></symbol>
<symbol id="mdata" viewBox="0 0 24 24"><path d="M3 0h14l5 5v19H3z" fill="#fff"/><path d="M5 9h9M5 12h8M5 15h7M5 18h12M5 21h12" stroke="#bbb"/><path d="M14 15l6-11 4 2-6 11-5 2z" fill="#e8703c"/></symbol>
<symbol id="deps" viewBox="0 0 24 24"><path d="M2 1h12v12H2zM10 9h13v14H10z" fill="#f0f0f0"/><path d="M11 2h11v7h3l-5 5-5-5h3V6h-7zM14 22H3v-7H0l5-6 5 6H7v3h7z" fill="#6b9be0" stroke="#a5c4ef" stroke-width=".6"/></symbol>
<symbol id="leg" viewBox="0 0 24 24"><path d="M2 2h5v5H2z" fill="#f9d616" stroke="#e88d11" stroke-width="1.500"/><path d="M2 9.500h5v5H2z" fill="#f25c0c" stroke="#b5231a" stroke-width="1.500"/><path d="M2 17h5v5H2z" fill="#35c25e" stroke="#107a36" stroke-width="1.500"/><path d="M9 5h7M9 12h10M9 19h5" stroke="#aaa" stroke-width="1.500"/></symbol>
<symbol id="serv" viewBox="0 0 24 24"><path d="M11 1h9v7h-9zM0 8h9v7H0zM15 14h9v7h-9z" fill="#1d4a86" stroke="#aebfd2"/><path d="M10 10h10M0 17h9M15 23h9M14 10v5H9" stroke="#ccc" stroke-width="1.500" fill="none"/></symbol>
<symbol id="digi" viewBox="0 0 24 24"><path d="M0 4l24-1v17H0z" fill="#e9e9e6"/><path d="M3 6l4 2-2 5-3-1zM9 10l6 0 2 5-5 4zM18 6h5v4z" fill="#a5a5a0"/><path d="M12 16L20 0l3 2-8 16-3 2z" fill="#f2da5c" stroke="#999" stroke-width=".6"/></symbol>
<symbol id="grad" viewBox="0 0 14 14"><path d="M.5 .5h11v3H.500z" fill="#ffd91c" stroke="#f39a1d"/><path d="M2.500 5.500h11v3h-11z" fill="#f24a0c" stroke="#f39a1d"/><path d="M.5 10.500h11v3H.500z" fill="#b30d0d" stroke="#5d0b0b"/></symbol>
<symbol id="quant" viewBox="0 0 16 16"><path d="M2 .7h12v14.600H2z" fill="#fdf7c4" stroke="#dcc22b"/><path d="M1 2v12M5.500 2v12M10.500 2v12M15 2v12" stroke="#222" stroke-width="1.800" stroke-dasharray="2 1"/></symbol>
<symbol id="plus" viewBox="0 0 16 16"><path d="M5.500 1.500h5v4h4v5h-4v4h-5v-4h-4v-5h4z" fill="#fff" stroke="#578a5c" stroke-width="1.500"/><path d="M8 4v8M4 8h8" stroke="#578a5c" stroke-width="2"/></symbol>
<symbol id="minus" viewBox="0 0 16 16"><path d="M1 5h14v6H1z" fill="#fff" stroke="#e6484c" stroke-width="1.200"/><path d="M3 8h10" stroke="#e6484c" stroke-width="2"/></symbol>
<symbol id="fx" viewBox="0 0 16 16"><path d="M7 1l2 4.500 5 .5-4 3.500 1.500 5L7 12l-4.500 2.500L4 9.500 0 6l5-.5z" fill="#bbb59a"/><path d="M10 12h2M13 10v4" stroke="#999"/></symbol>
<symbol id="az" viewBox="0 0 16 16"><text x="0" y="7" font-size="9" font-weight="700" fill="#c08a90">A</text><text x="0" y="15" font-size="9" font-weight="700" fill="#8a9cb0">Z</text><path d="M11 1v9H8l4 5 4-5h-3V1z" fill="#aaa"/></symbol>
<symbol id="clear" viewBox="0 0 14 12"><path d="M4 1h10v10H4L0 6z" fill="#8f8f8f"/><path d="M5.500 3.500l5 5M10.500 3.500l-5 5" stroke="#fff" stroke-width="1.200"/></symbol>
<symbol id="mouse" viewBox="0 0 16 16"><path d="M1 2c5-3 10 1 12 8 0 5-5 6-7 3C3 10 5 6 1 2z" fill="#eee" stroke="#333" stroke-width="1.300"/><path d="M2 8l8-6M4 11l9-7M6 14l8-7M12 1l2 2" stroke="#333" stroke-width="1.200"/></symbol>
<symbol id="lock" viewBox="0 0 12 16"><path d="M2.500 8V4c0-4 7-4 7 0v4" fill="none" stroke="#777" stroke-width="1.500"/><path d="M0 7h12v8H0z" fill="#555"/></symbol>
<symbol id="crs" viewBox="0 0 16 16"><circle cx="8" cy="8" r="6" fill="#c8c8c8" stroke="#666"/><path d="M0 8h16M8 0v16M3 4q5 3 10 0M3 12q5-3 10 0M6 2q-3 6 0 12M10 2q3 6 0 12" fill="none" stroke="#666"/></symbol>
<symbol id="msg" viewBox="0 0 16 16"><path d="M8 1c5 0 8 3 8 6s-1 4-2 5l1 4-5-2.500C5 14 0 12 0 7c0-3 3-6 8-6z" fill="#5a5a5a"/></symbol>
</defs>
</svg>

<header>
  <div class="titlebar">
    <svg class="logo"><use href="#qgis"/></svg><span>*Municipios — QGIS</span>
    <div class="winbtns">
      <button aria-label="Minimize"><svg viewBox="0 0 10 10"><path d="M0 5.500h10" stroke="#777"/></svg></button>
      <button aria-label="Restore"><svg viewBox="0 0 10 10"><path d="M.5 2.500h7v7h-7zM2.500 2.500v-2h7v7h-2" fill="none" stroke="#777"/></svg></button>
      <button aria-label="Close"><svg viewBox="0 0 10 10"><path d="M0 0l10 10M10 0L0 10" stroke="#777"/></svg></button>
    </div>
  </div>
  <nav class="menu">
    <button>Pro<u>j</u>ect</button><button><u>E</u>dit</button><button><u>V</u>iew</button><button><u>L</u>ayer</button><button><u>S</u>ettings</button><button><u>P</u>lugins</button><button>Vect<u>o</u>r</button><button><u>R</u>aster</button><button><u>D</u>atabase</button><button><u>W</u>eb</button><button><u>M</u>esh</button><button>Pro<u>c</u>essing</button><button><u>H</u>elp</button>
  </nav>
  <div class="toolbar">
    <i class="grip"></i>
    <button aria-label="New"><svg><use href="#new"/></svg></button>
    <button aria-label="Open"><svg><use href="#open"/></svg></button>
    <button aria-label="Save"><svg><use href="#save"/></svg></button>
    <button aria-label="New layout"><svg><use href="#layout"/></svg></button>
    <button aria-label="Layout manager"><svg><use href="#manager"/></svg></button>
    <button aria-label="Style manager"><svg><use href="#styles"/></svg></button>
    <i class="grip"></i>
    <button class="on" aria-label="Pan"><svg><use href="#hand"/></svg></button>
    <button aria-label="Pan to selection"><svg><use href="#pansel"/></svg></button>
    <button aria-label="Zoom in"><svg><use href="#zin"/></svg></button>
    <button aria-label="Zoom out"><svg><use href="#zout"/></svg></button>
    <button aria-label="Zoom full"><svg><use href="#zfull"/></svg></button>
    <button aria-label="Zoom to selection"><svg><use href="#zsel"/></svg></button>
    <button aria-label="Zoom to layer"><svg><use href="#zlay"/></svg></button>
    <button disabled aria-label="Native resolution"><svg><use href="#znat"/></svg></button>
    <button aria-label="Zoom last"><svg><use href="#zlast"/></svg></button>
    <button disabled aria-label="Zoom next"><svg><use href="#znext"/></svg></button>
    <button aria-label="New map view"><svg><use href="#nmap"/></svg></button>
    <button aria-label="New 3D view"><svg><use href="#n3d"/></svg></button>
    <button aria-label="New bookmark"><svg><use href="#bookn"/></svg></button>
    <button aria-label="Bookmarks"><svg><use href="#book"/></svg></button>
    <button aria-label="Temporal controller"><svg><use href="#clock"/></svg></button>
    <button aria-label="Refresh"><svg><use href="#refresh"/></svg></button>
    <i class="grip"></i>
    <button class="drop" aria-label="Select"><svg><use href="#sel"/></svg></button>
    <button class="drop" aria-label="Select by form"><svg><use href="#self"/></svg></button>
    <button class="drop" aria-label="Deselect"><svg><use href="#desel"/></svg></button>
    <button aria-label="Select by location"><svg><use href="#selloc"/></svg></button>
    <i class="grip"></i>
    <button aria-label="Identify"><svg><use href="#ident"/></svg></button>
    <button aria-label="Field calculator"><svg><use href="#abacus"/></svg></button>
    <button aria-label="Toolbox"><svg><use href="#gear"/></svg></button>
    <button aria-label="Statistics"><svg><use href="#sigma"/></svg></button>
    <button class="drop" aria-label="Attribute table"><svg><use href="#table"/></svg></button>
    <button class="drop" aria-label="Measure"><svg><use href="#measure"/></svg></button>
    <button aria-label="Map tips"><svg><use href="#tip"/></svg></button>
    <button class="drop" disabled aria-label="Run action"><svg><use href="#run"/></svg></button>
  </div>
  <div class="toolbar second">
    <i class="grip"></i>
    <button aria-label="Data source manager"><svg><use href="#dsm"/></svg></button>
    <button aria-label="New GeoPackage"><svg><use href="#gpkg"/></svg></button>
    <button aria-label="New shapefile"><svg><use href="#shp"/></svg></button>
    <button aria-label="New SpatiaLite"><svg><use href="#feather"/></svg></button>
    <button aria-label="New memory layer"><svg><use href="#chip"/></svg></button>
    <button aria-label="New mesh"><svg><use href="#mesh"/></svg></button>
    <i class="sep"></i>
    <button aria-label="New virtual layer"><svg><use href="#virt"/></svg></button>
    <i class="sep"></i><i class="grip"></i>
    <button disabled aria-label="Current edits"><svg><use href="#pencils"/></svg></button>
    <button aria-label="Toggle editing"><svg><use href="#pencil"/></svg></button>
    <button disabled aria-label="Save edits"><svg><use href="#savee"/></svg></button>
    <button disabled aria-label="Add feature"><svg><use href="#blob"/></svg></button>
    <button class="drop" disabled aria-label="Vertex tool"><svg><use href="#vertex"/></svg></button>
    <button disabled aria-label="Multi edit"><svg><use href="#multi"/></svg></button>
    <button disabled aria-label="Delete"><svg><use href="#trash"/></svg></button>
    <button disabled aria-label="Cut"><svg><use href="#cut"/></svg></button>
    <button disabled aria-label="Copy"><svg><use href="#copy"/></svg></button>
    <button disabled aria-label="Paste"><svg><use href="#paste"/></svg></button>
    <button disabled aria-label="Undo"><svg><use href="#undo"/></svg></button>
    <button disabled aria-label="Redo"><svg><use href="#redo"/></svg></button>
    <i class="grip"></i>
    <button aria-label="Labeling"><svg><use href="#abc"/></svg></button>
    <button aria-label="Diagrams"><svg><use href="#diag"/></svg></button>
    <i class="sep"></i>
    <button aria-label="Pinned labels"><svg><use href="#abt"/></svg></button>
    <button aria-label="Unplaced labels"><svg><use href="#abcr"/></svg></button>
    <i class="sep"></i>
    <button disabled aria-label="Pin labels"><svg><use href="#lab"/></svg></button>
    <button disabled aria-label="Show labels"><svg><use href="#labe"/></svg></button>
    <button disabled aria-label="Move label"><svg><use href="#labs"/></svg></button>
    <button disabled aria-label="Rotate label"><svg><use href="#labr"/></svg></button>
    <button disabled aria-label="Change label"><svg><use href="#labc"/></svg></button>
    <i class="grip"></i>
    <button aria-label="MetaSearch"><svg><use href="#meta"/></svg></button>
    <i class="grip"></i>
    <button aria-label="Python console"><svg><use href="#python"/></svg></button>
    <i class="grip"></i>
    <button aria-label="Help contents"><svg><use href="#help"/></svg></button>
    <i class="grip"></i>
  </div>
</header>

<main>
  <aside class="docks">
    <section class="dock browser">
      <h2>Browser<button aria-label="Float"><svg><use href="#float"/></svg></button><button aria-label="Close"><svg><use href="#shut"/></svg></button></h2>
      <div class="tools">
        <button aria-label="Add layer"><svg><use href="#addlay"/></svg></button><button aria-label="Refresh"><svg><use href="#refresh"/></svg></button><button aria-label="Filter"><svg><use href="#filter"/></svg></button><button aria-label="Collapse all"><svg><use href="#coll"/></svg></button><button aria-label="Properties"><svg><use href="#info"/></svg></button>
      </div>
      <div class="treebox">
        <ul class="tree">
          <li class="l1"><i class="tw"></i><svg><use href="#folder"/></svg>InteractiveScriptFunction</li>
          <li class="l1"><i class="tw"></i><svg><use href="#folder"/></svg>LogScript</li>
          <li class="l1"><i class="tw open"></i><svg><use href="#foldero"/></svg>PandasBasic</li>
          <li class="l2"><i class="tw open"></i><svg><use href="#foldero"/></svg>Datos</li>
          <li class="l3"><i></i><svg><use href="#csv"/></svg>ArcGISProValor.csv</li>
          <li class="l3"><i></i><svg><use href="#csv"/></svg>ArcMapCount.csv</li>
          <li class="l3"><i></i><svg><use href="#csv"/></svg>ArcMapPercentage.csv</li>
          <li class="l3"><i></i><svg><use href="#csv"/></svg>ArcMapValor.csv</li>
          <li class="l3"><i class="tw"></i><svg><use href="#db"/></svg>GISClassificationMethodValue.xlsx</li>
          <li class="l3 cur"><i></i><svg><use href="#vec"/></svg>municipios202110.shp</li>
          <li class="l3"><i class="tw"></i><svg><use href="#zip"/></svg>Servicio-610.zip</li>
          <li class="l2"><i class="tw"></i><svg><use href="#folder"/></svg>Graph</li>
        </ul>
        <div class="vbar"><b class="up"></b><span></span><b class="down"></b></div>
        <div class="hbar"><b class="left"></b><span></span><b class="right"></b></div>
        <div class="corner"></div>
      </div>
    </section>
    <section class="dock layers">
      <h2>Layers<button aria-label="Float"><svg><use href="#float"/></svg></button><button aria-label="Close"><svg><use href="#shut"/></svg></button></h2>
      <div class="tools">
        <button aria-label="Styling"><svg><use href="#brush"/></svg></button><button aria-label="Add group"><svg><use href="#group"/></svg></button><button aria-label="Themes"><svg><use href="#eye"/></svg></button><button aria-label="Filter legend"><svg><use href="#filter"/></svg></button><button class="drop" aria-label="Filter by expression"><svg><use href="#efil"/></svg></button><button aria-label="Expand all"><svg><use href="#expd"/></svg></button><button aria-label="Collapse all"><svg><use href="#coll"/></svg></button><button aria-label="Remove layer"><svg><use href="#remlay"/></svg></button>
      </div>
      <ul class="laytree">
        <li class="root"><i class="tw open"></i><label><input type="checkbox" checked><svg><use href="#poly"/></svg><b>municipios202110</b></label></li>
        <li><label><input type="checkbox" checked><i class="sw c1"></i>15.732852 - 132.675372</label></li>
        <li><label><input type="checkbox" checked><i class="sw c2"></i>132.675372 - 287.394448</label></li>
        <li><label><input type="checkbox" checked><i class="sw c3"></i>287.394448 - 699.161101</label></li>
        <li><label><input type="checkbox" checked><i class="sw c4"></i>699.161101 - 65187.505271</label></li>
      </ul>
    </section>
  </aside>

  <div class="canvas">
    <svg id="map" viewBox="298 122 1621 881" role="img" aria-label="Municipios map"></svg>

    <section class="dialog" role="dialog" aria-label="Layer Properties">
      <div class="dtitle"><svg><use href="#qgis"/></svg><span>Layer Properties — municipios202110 — Symbology</span><button aria-label="Close"><svg viewBox="0 0 10 10"><path d="M0 0l10 10M10 0L0 10" stroke="#777"/></svg></button></div>
      <div class="dbody">
        <nav class="side">
          <div class="search"><svg><use href="#mag"/></svg><input type="text" aria-label="Search"></div>
          <button><svg><use href="#info"/></svg>Information</button>
          <button><svg><use href="#source"/></svg>Source</button>
          <button class="active"><svg><use href="#symb"/></svg>Symbology</button>
          <button><svg><use href="#abc"/></svg>Labels</button>
          <button><svg><use href="#masks"/></svg>Masks</button>
          <button><svg><use href="#cube"/></svg>3D View</button>
          <button><svg><use href="#diag"/></svg>Diagrams</button>
          <button><svg><use href="#fields"/></svg>Fields</button>
          <button><svg><use href="#form"/></svg>Attributes Form</button>
          <button><svg><use href="#joins"/></svg>Joins</button>
          <button><svg><use href="#aux"/></svg>Auxiliary Storage</button>
          <button><svg><use href="#act"/></svg>Actions</button>
          <button><svg><use href="#disp"/></svg>Display</button>
          <button><svg><use href="#rend"/></svg>Rendering</button>
          <button><svg><use href="#temp"/></svg>Temporal</button>
          <button><svg><use href="#eps"/></svg>Variables</button>
          <button><svg><use href="#mdata"/></svg>Metadata</button>
          <button><svg><use href="#deps"/></svg>Dependencies</button>
          <button><svg><use href="#leg"/></svg>Legend</button>
          <button><svg><use href="#serv"/></svg>QGIS Server</button>
          <button><svg><use href="#digi"/></svg>Digitizing</button>
        </nav>
        <div class="pane">
          <div class="select renderer"><svg><use href="#grad"/></svg><select aria-label="Renderer"><option>Graduated</option></select></div>
          <div class="form">
            <label for="val">Value</label>
            <div class="row gap"><div class="field combo"><span class="num">1.2</span><input id="val" type="text" value="Areakm2"><button class="dd" aria-label="Choose field"></button></div><button class="sq" aria-label="Expression"><svg><use href="#eps"/></svg></button></div>
            <label for="sym">Symbol</label>
            <div class="row"><button id="sym" class="prev tall"><span class="violet"></span></button><button class="mini tall" aria-label="Symbol menu"></button></div>
            <label for="lf">Legend format</label>
            <div class="row gap"><div class="field lfmt"><input id="lf" type="text" value="%1 - %2"></div><div class="field spin prec"><input type="text" value="cision 6" aria-label="Precision"><svg><use href="#clear"/></svg><span class="ud"><button aria-label="Up"></button><button aria-label="Down"></button></span></div><label class="chk trim"><input type="checkbox" checked>Trim</label></div>
            <label for="ramp">Color ramp</label>
            <div class="row"><button id="ramp" class="prev"><span class="ramp"></span></button><button class="mini" aria-label="Ramp menu"></button></div>
          </div>
          <div class="tabs"><button class="tab sel">Classes</button><button class="tab">Histogram</button></div>
          <div class="tablebox">
            <table>
              <thead><tr><th class="k1">Symbol<i class="tw open"></i></th><th class="k2">Values</th><th>Legend</th></tr></thead>
              <tbody>
                <tr><td><input type="checkbox" checked aria-label="Class 1"><i class="sw c1"></i></td><td>15.73285151 - 132.67537162</td><td>15.732852 - 132.675372</td></tr>
                <tr><td><input type="checkbox" checked aria-label="Class 2"><i class="sw c2"></i></td><td>132.67537162 - 287.39444773</td><td>132.675372 - 287.394448</td></tr>
                <tr><td><input type="checkbox" checked aria-label="Class 3"><i class="sw c3"></i></td><td>287.39444773 - 699.16110077</td><td>287.394448 - 699.161101</td></tr>
                <tr><td><input type="checkbox" checked aria-label="Class 4"><i class="sw c4"></i></td><td>699.16110077 - 65187.50527140</td><td>699.161101 - 65187.505271</td></tr>
              </tbody>
            </table>
          </div>
          <div class="row moderow"><label for="mode">Mode</label><div class="select mode"><svg><use href="#quant"/></svg><select id="mode"><option>Equal Count (Quantile)</option></select></div><span class="grow"></span><label for="cls">Classes</label><div class="field spin cls"><input id="cls" type="text" value="4"><span class="ud"><button aria-label="Up"></button><button aria-label="Down"></button></span></div></div>
          <div class="row gap btnrow"><button class="btn">Classify</button><button class="btn ic" aria-label="Add class"><svg><use href="#plus"/></svg></button><button class="btn ic" aria-label="Remove class"><svg><use href="#minus"/></svg></button><button class="btn">Delete All</button><span class="grow"></span><button class="btn more">Advanced</button></div>
          <label class="chk link"><input type="checkbox" checked>Link class boundaries</label>
          <h3><i></i>Layer Rendering</h3>
          <div class="group">
            <div class="row opac"><label for="op">Opacity</label><input id="op" type="range" min="0" max="100" value="50"><div class="field spin pct"><input type="text" value="50.0 %" aria-label="Opacity value"><svg><use href="#clear"/></svg><span class="ud"><button aria-label="Up"></button><button aria-label="Down"></button></span></div></div>
            <div class="row blend"><span class="bl">Blending mode</span><div class="bm"><label for="b1">Layer</label><div class="select"><select id="b1"><option>Normal</option></select></div></div><div class="bm"><label for="b2">Feature</label><div class="select"><select id="b2"><option>Normal</option></select></div></div></div>
            <div class="row eff"><label class="chk"><input type="checkbox">Draw effects</label><span class="grow"></span><button class="sq low" disabled aria-label="Effects"><svg><use href="#fx"/></svg></button></div>
            <div class="row ord"><label class="chk"><input type="checkbox">Control feature rendering order</label><span class="grow"></span><button class="sq" disabled aria-label="Order"><svg><use href="#az"/></svg></button></div>
          </div>
          <div class="row gap foot"><button class="btn more">Style</button><span class="grow"></span><button class="btn">OK</button><button class="btn">Cancel</button><button class="btn">Apply</button><button class="btn">Help</button></div>
        </div>
      </div>
    </section>
  </div>
</main>

<footer>
  <div class="field locate"><svg><use href="#mag"/></svg><input type="text" placeholder="Type to locate (Ctrl+K)" aria-label="Locate"></div>
  <span class="grow"></span>
  <label for="co">Coordinate</label><div class="field f-co"><input id="co" type="text" value="1767450,2033814"></div>
  <svg class="fi"><use href="#mouse"/></svg>
  <label for="sc">Scale</label><div class="field combo f-sc"><input id="sc" type="text" value="1:9525337"><button class="dd" aria-label="Scales"></button></div>
  <svg class="fi"><use href="#lock"/></svg>
  <label for="mg">Magnifier</label><div class="field spin f-sp"><input id="mg" type="text" value="100%"><span class="ud"><button aria-label="Up"></button><button aria-label="Down"></button></span></div>
  <label for="ro">Rotation</label><div class="field spin f-sp"><input id="ro" type="text" value="0.0 °"><span class="ud"><button aria-label="Up"></button><button aria-label="Down"></button></span></div>
  <label class="chk"><input type="checkbox" checked>Render</label>
  <button class="plain crs"><svg><use href="#crs"/></svg>EPSG:9377</button>
  <button class="plain msg" aria-label="Messages"><svg><use href="#msg"/></svg></button>
</footer>
<script src="map.js"></script>
</body>
</html>
```

FILE: styles.css
```css
* { box-sizing: border-box; }
html, body { height: 100%; }
body { margin: 0; display: flex; flex-direction: column; font: 11px/16px "Open Sans", "Noto Sans", sans-serif; color: #000; background: #efefef; overflow: hidden; }
button, input, select { font: inherit; color: inherit; margin: 0; padding: 0; border: 0; background: none; }
input { min-width: 0; outline: 0; }
svg { display: block; flex: none; }
svg text { font-family: "Liberation Sans", sans-serif; }
svg text.serif { font-family: "Liberation Serif", serif; }
ul, h2, h3 { margin: 0; padding: 0; list-style: none; font-size: 11px; }
.defs { position: absolute; width: 0; height: 0; }
.grow { flex: 1; }
.row { display: flex; align-items: center; }
.gap { gap: 6px; }

.titlebar { height: 28px; background: #fff; display: flex; align-items: center; padding: 0 19px 6px 2px; gap: 5px; font-size: 12px; color: #8c8c8c; }
.logo { width: 16px; height: 16px; }
.winbtns { margin-left: auto; display: flex; gap: 36px; }
.winbtns svg { width: 10px; height: 10px; }
.menu { height: 24px; margin-top: -5px; position: relative; background: #efefef; display: flex; padding-left: 10px; gap: 15px; color: #8f8f8f; font-size: 11px; }
.menu button { line-height: 20px; height: 20px; }
header { border-bottom: 2px solid #b4b4b4; }
.toolbar { height: 39px; margin-top: -5px; padding-bottom: 1px; background: linear-gradient(#fafafa, #efefef); border-top: 1px solid #d2d2d2; display: flex; align-items: center; position: relative; }
.toolbar.second { margin-top: 0; border-top-color: #b4b4b4; }
.toolbar button { width: 33px; height: 31px; display: flex; align-items: center; justify-content: center; position: relative; }
.toolbar button.on { background: #dcdcdc; border: 1px solid #aaa; border-radius: 3px; }
.toolbar svg { width: 24px; height: 24px; overflow: visible; }
.toolbar button:disabled svg { opacity: .35; filter: grayscale(.6); }
.toolbar button.drop { width: 45px; padding-right: 12px; }
.drop::after { content: ""; position: absolute; right: 1px; top: 13px; border: 4px solid transparent; border-top: 5px solid #555; border-bottom: 0; }
.drop:disabled::after { opacity: .6; }
.grip { width: 16px; height: 17px; background: repeating-linear-gradient(#b8b8b8 0 1px, transparent 1px 3px) 8px 0 / 1px 100% no-repeat, repeating-linear-gradient(#b8b8b8 0 1px, transparent 1px 3px) 11px 0 / 1px 100% no-repeat; }
.grip:first-child { width: 12px; background-position: 5px 0, 8px 0; }
.sep { width: 7px; height: 22px; border-left: 1px solid #ccc; }

main { flex: 1; display: flex; min-height: 0; }
.docks { width: 298px; flex: none; border-right: 1px solid #b4b4b4; display: flex; flex-direction: column; padding-right: 7px; }
.dock { display: flex; flex-direction: column; }
.dock.browser { height: 283px; }
.dock.layers { flex: 1; }
h2 { font-weight: 400; display: flex; align-items: center; height: 18px; padding: 0 2px 0 4px; gap: 3px; }
h2 button:first-of-type { margin-left: auto; }
h2 svg { width: 11px; height: 11px; }
.tools { display: flex; align-items: center; gap: 9px; padding: 0 8px 1px; height: 31px; }
.tools svg { width: 16px; height: 16px; overflow: visible; }
.tools button { position: relative; }
.tools button.drop { padding-right: 9px; }
.tools .drop::after { top: 6px; right: -4px; }
.tools .drop + button { margin-left: 2px; }
.layers .tools { height: 32px; }
.treebox { flex: none; height: 228px; border: 1px solid #b4b4b4; background: #fff; display: grid; grid-template: minmax(0, 1fr) 14px / minmax(0, 1fr) 14px; }
.tree { overflow: hidden; }
li { height: 18px; display: flex; align-items: center; white-space: nowrap; }
.tree i { width: 16px; flex: none; }
.tree svg { width: 14px; height: 15px; margin-right: 7px; }
.l1 { padding-left: 36px; } .l2 { padding-left: 52px; } .l3 { padding-left: 68px; }
.cur, .root { background: #efefef; }
.tw::before { content: ""; display: block; width: 0; border: 4px solid transparent; border-left: 5px solid #555; border-right: 0; margin-left: 2px; }
.tw.open::before { border: 4px solid transparent; border-top: 5px solid #555; border-bottom: 0; margin-left: 0; }
.vbar, .hbar { background: #e2e2e2; display: flex; border-left: 1px solid #b4b4b4; }
.vbar { flex-direction: column; }
.hbar { border-left: 0; border-top: 1px solid #b4b4b4; }
.corner { border: 1px solid #b4b4b4; border-width: 1px 0 0 1px; background: #efefef; }
.vbar span { height: 36px; background: #fafafa; border: 1px solid #b4b4b4; border-width: 1px 0; margin: 66px 0 auto; }
.hbar span { width: 162px; background: #fafafa; border-right: 1px solid #b4b4b4; margin-right: auto; }
.vbar b, .hbar b { flex: none; width: 13px; height: 14px; background: #f8f8f8; display: grid; place-items: center; }
.vbar b::before, .hbar b::before { content: ""; border: 4px solid transparent; }
b.up::before { border-bottom-color: #444; border-top: 0; } b.down::before { border-top-color: #444; border-bottom: 0; }
b.left::before { border-right-color: #444; border-left: 0; } b.right::before { border-left-color: #444; border-right: 0; }
.laytree { flex: 1; background: #fff; border: 1px solid #b4b4b4; }
.laytree label { display: flex; align-items: center; }
.laytree li { padding-left: 43px; }
.laytree li.root { padding-left: 6px; }
.laytree .root i { width: 17px; }
.laytree svg { width: 16px; height: 13px; margin: 0 6px; }
.laytree b { text-decoration: underline; }
.sw { width: 16px; height: 16px; border: 1px solid #555; display: inline-block; }
.laytree .sw { margin: 0 6px; }
.c1 { background: #d7191c; border-color: #96292b; } .c2 { background: #fdc980; border-color: #a3875f; } .c3 { background: #c4e6a9; border-color: #7f956e; } .c4 { background: #2b83ba; border-color: #25597a; }

input[type=checkbox] { appearance: none; width: 14px; height: 14px; flex: none; background: #fff; border: 1px solid #b4b4b4; position: relative; }
input[type=checkbox]:checked::after { content: ""; position: absolute; left: 2px; top: 1px; width: 8px; height: 9px; background: #000; clip-path: polygon(0 50%, 18% 42%, 38% 68%, 80% 0, 100% 0, 46% 100%, 32% 100%); }

.canvas { flex: 1; position: relative; background: #fff; border-top: 1px solid #ddd; min-width: 0; overflow: hidden; }
#map { position: absolute; inset: 0; width: 100%; height: 100%; }

.dialog { position: absolute; left: 53px; top: 24px; width: 827px; border: 1px solid #b9b9b9; border-radius: 8px; background: #efefef; overflow: hidden; }
.dtitle { height: 30px; background: #fff; display: flex; align-items: center; padding: 0 10px 0 8px; gap: 5px; color: #8c8c8c; }
.dtitle > svg { width: 16px; height: 16px; }
.dtitle button { margin-left: auto; }
.dtitle button svg { width: 11px; height: 11px; }
.dbody { display: flex; }
.side { width: 150px; flex: none; background: #5e5e5e; display: flex; flex-direction: column; padding-bottom: 18px; }
.search { background: #fff; height: 21px; margin: 1px 1px 7px; border-radius: 2px; display: flex; align-items: center; padding: 0 8px; }
.search svg { width: 13px; height: 13px; }
.search input { flex: 1; }
.side > button { height: 36px; display: flex; align-items: center; gap: 8px; padding-left: 4px; color: #fff; text-align: left; }
.side > button svg { width: 24px; height: 24px; overflow: visible; }
.side > button.active { background: #efefef; color: #000; padding-left: 7px; }
.pane { flex: 1; min-width: 0; padding: 3px 3px 2px 4px; display: flex; flex-direction: column; }
.select { position: relative; display: flex; align-items: center; height: 24px; border: 1px solid #a9a9a9; border-radius: 3px; background: linear-gradient(#fff, #ececec); }
.select select { appearance: none; flex: 1; height: 100%; padding-left: 4px; outline: 0; }
.select::after, .dd::after, .mini::after, .more::after { content: ""; border: 4px solid transparent; border-top: 5px solid #555; border-bottom: 0; }
.select::after { position: absolute; right: 7px; }
.renderer svg { width: 13px; height: 14px; margin-left: 7px; }
.form { display: grid; grid-template-columns: 70px minmax(0, 1fr); column-gap: 6px; row-gap: 6px; margin-top: 6px; align-items: center; }
.form > label { white-space: nowrap; }
.field { display: flex; align-items: center; background: #fff; border: 1px solid #a9a9a9; border-radius: 3px; height: 22px; overflow: hidden; }
.field input { flex: 1; width: 20px; padding-left: 3px; }
.combo { flex: 1; height: 24px; }
.num { font: 700 9px/16px "DejaVu Sans", sans-serif; color: #555; padding: 0 2px 0 3px; }
.dd { width: 21px; height: 100%; border-left: 1px solid #a9a9a9; background: linear-gradient(#fff, #ececec); display: grid; place-items: center; }
.sq { width: 24px; height: 24px; border: 1px solid #a9a9a9; border-radius: 3px; background: linear-gradient(#fff, #ececec); display: grid; place-items: center; }
.sq svg { width: 14px; height: 14px; }
.sq.low { height: 16px; }
.sq.low svg { width: 12px; height: 12px; }
.sq:disabled { opacity: .6; }
.prev { flex: 1; height: 22px; border: 1px solid #a9a9a9; border-radius: 3px; background: #fff; padding: 2px 4px; display: flex; }
.prev span { flex: 1; align-self: stretch; }
.tall { height: 27px; }
.violet { background: #8c5a99; border: 1px solid #54365c; }
.ramp { background: linear-gradient(90deg, #d7191c, #fdae61 25%, #ffffbf 50%, #abdda4 75%, #2b83ba); }
.mini { width: 12px; height: 22px; margin-left: 1px; border: 1px solid #a9a9a9; border-radius: 3px; background: linear-gradient(#fff, #ececec); display: grid; place-items: center; }
.mini.tall { height: 27px; }
.lfmt { flex: 1; }
.spin { height: 20px; }
.spin svg { width: 13px; height: 11px; margin-right: 11px; }
.prec { width: 84px; } .prec input { padding-left: 2px; }
.ud { width: 14px; height: 100%; flex: none; border-left: 1px solid #a9a9a9; background: #f6f6f6; display: flex; flex-direction: column; align-items: center; justify-content: center; gap: 3px; }
.ud button { height: 4px; width: 0; border: 4px solid transparent; border-bottom-color: #555; border-top: 0; }
.ud button + button { border-bottom: 0; border-top: 4px solid #555; }
.chk { display: flex; align-items: center; gap: 4px; }
.trim { width: 45px; }
.tabs { display: flex; align-items: flex-end; margin-top: 6px; border-bottom: 1px solid #b4b4b4; height: 24px; }
.tab { height: 21px; padding: 0 9px; border: 1px solid #b4b4b4; border-radius: 3px 3px 0 0; border-bottom: 0; background: #e6e6e6; }
.tab.sel { height: 24px; background: #f9f9f9; margin-bottom: -1px; border-right-color: #a9a9a9; }
.tab + .tab { border-left: 0; }
.tablebox { margin-top: 10px; height: 332px; border: 1px solid #b4b4b4; background: #fff; }
table { width: 100%; border-collapse: collapse; table-layout: fixed; }
th { height: 19px; padding: 0 3px 0 2px; font-weight: 400; text-align: left; background: linear-gradient(#fff, #ececec); border-bottom: 1px solid #b4b4b4; border-right: 1px solid #ccc; position: relative; }
th:last-child { border-right: 0; }
th i { position: absolute; right: 3px; top: 6px; }
.k1 { width: 66px; } .k2 { width: 168px; }
td { height: 18px; padding: 0 0 0 3px; white-space: nowrap; line-height: 14px; vertical-align: top; }
td:first-child { line-height: 0; padding-top: 1px; }
td input, td .sw { vertical-align: middle; }
td .sw { margin-left: 6px; }
.moderow { margin-top: 6px; height: 24px; }
.mode { width: 158px; margin-left: 3px; }
.mode svg { width: 16px; height: 16px; margin-left: 5px; }
.mode select { padding-left: 2px; }
.cls { width: 68px; margin-left: 6px; }
.btnrow { margin-top: 6px; height: 24px; }
.btn { width: 80px; height: 21px; border: 1px solid #a9a9a9; border-radius: 3px; background: linear-gradient(#fff, #ececec); position: relative; }
.btn.ic { width: 28px; height: 24px; display: grid; place-items: center; }
.btn.ic svg { width: 15px; height: 15px; }
.more { padding-right: 14px; }
.more::after { position: absolute; right: 4px; top: 8px; border-width: 4px 3px 0; }
.link { margin-top: 8px; }
h3 { display: flex; align-items: center; gap: 8px; height: 20px; margin: 15px 0 0 3px; }
h3 i { border: 5px solid transparent; border-top: 7px solid #333; border-bottom: 0; }
.group { border: 1px solid #d5d5d5; background: #ececec; height: 137px; padding: 10px 5px 0 2px; margin: 0 0 0 1px; }
.opac label, .bl { width: 225px; }
.opac input[type=range] { flex: 1; appearance: none; height: 14px; margin: 0 4px 0 0; }
.opac input::-webkit-slider-runnable-track { height: 5px; border: 1px solid #a9a9a9; border-radius: 2px; background: linear-gradient(90deg, #fff 50%, #d6d6d6 50%); }
.opac input::-webkit-slider-thumb { appearance: none; width: 13px; height: 13px; margin-top: -5px; border: 1px solid #a9a9a9; border-radius: 3px; background: #fff; }
.pct { width: 100px; }
.blend { margin-top: 4px; height: 39px; }
.bl { margin-right: -1px; }
.bm { flex: 1; }
.bm + .bm { margin-left: 1px; }
.bm .select { height: 22px; }
.eff { margin-top: 4px; height: 20px; }
.ord { margin-top: 3px; height: 24px; }
.foot { margin-top: 6px; height: 21px; }

footer { height: 31px; border-top: 1px solid #b4b4b4; display: flex; align-items: center; padding: 0 5px 4px 4px; white-space: nowrap; }
footer label { margin-right: 4px; }
footer svg { width: 14px; height: 14px; }
.locate { width: 200px; padding-left: 8px; height: 21px; }
.locate svg { width: 12px; height: 12px; margin-right: 4px; }
.locate input::placeholder { color: #777; opacity: 1; }
.f-co { width: 102px; } .f-co input { padding-left: 6px; }
.fi { margin: 0 12px 0 6px; }
.f-sc { flex: none; width: 81px; height: 22px; }
.f-sc + .fi { margin: 0 5px 0 9px; }
.f-sp { width: 83px; margin-right: 8px; }
footer .chk { margin-right: 16px; }
.plain { display: flex; align-items: center; gap: 1px; }
.msg { margin-left: 22px; }
.msg svg { width: 16px; height: 16px; }
```

FILE: map.js
```js
// Choropleth of the municipios layer: digitised country outline, an irregular
// mosaic for the small Andean and Caribbean units, traced limits for the large ones.
(function () {
  const svg = document.getElementById('map');
  let seed = 7;
  const rnd = () => ((seed = (seed * 16807) % 2147483647) / 2147483647);

  // Digitising sheets: each turns a flat list of sheet units into map points.
  const sheet = (x, y, sx, sy) => s => {
    const n = s.trim().split(/[\s,]+/).map(Number), out = [];
    for (let i = 0; i < n.length; i += 2) out.push([x + n[i] / sx, y + n[i + 1] / sy]);
    return out;
  };
  const N = sheet(1300, 170, 3, 3), S = sheet(1300, 540, 2.751, 3), E = sheet(1600, 400, 3, 3);

  const outline = [
    ...N('1098,98 1085,65 1060,50 1030,46 1018,58 1005,62 998,72 995,85 985,72 963,76 962,105 945,125 915,138 880,155 865,168 830,195 815,203 750,203 720,192 700,198 694,210 692,235 660,240 613,224 600,238 580,258 555,272 530,290 522,330 505,348 522,352 518,375 503,408 518,415 512,440 470,442 445,470 438,490 405,515 388,535 340,552 360,570 362,640 345,638 350,605 335,600 315,568 282,543 272,562 295,600 304,632 300,645 285,655 255,695 235,670 232,698 220,702 214,735 240,765 245,785 262,800 280,800 285,840 265,860 275,880 292,905 287,935 258,955 272,965 275,1010 280,1050 278,1095 257,1122 258,1140 275,1155 290,1150 297,1160 285,1168 302,1180'),
    ...S('285,68 272,80 272,100 245,122 232,150 215,185 210,215 165,225 140,225 110,240 90,285 105,325 85,335 72,335 52,357 100,405 140,422 150,440 175,455 205,465 215,485 235,495 235,522 280,528 290,538 365,545 370,522 385,520 420,535 445,568 510,590 525,582 560,603 605,635 620,655 630,695 665,710 680,735 710,745 722,775 720,800 765,812 772,850 765,875 795,895 830,885 860,900 895,895 915,880 925,860 965,870 975,888 1020,870 1060,870 1075,895 1110,905 1140,930 1130,965 1105,995 1062,1073 1085,1085 1105,1070 1120,1085 1155,1130 1180,970 1200,840 1220,750 1215,710 1195,675 1197,645 1140,598 1145,500 1210,480 1230,492 1252,490 1245,450 1240,437 1175,432 1165,430 1165,350 1210,346 1367,346 1355,335 1360,310 1395,335 1430,318 1435,295 1465,282 1480,335 1497,345 1500,400 1505,420 1528,412 1530,395 1515,345 1490,300 1488,265 1440,215 1410,205 1470,160 1473,130 1448,78 1415,30'),
    ...E('640,400 635,385 638,300 632,290 662,270 662,230 688,200 682,170 635,163 610,175 530,187 470,178 445,195 424,190 335,78 310,78 260,63 230,68 200,75 130,68 80,70'),
    ...N('975,755 960,715 930,710 920,650 938,628 930,590 900,550 885,490 870,485 852,465 840,475 808,478 835,430 860,390 865,320 885,290 920,225 950,220 985,150 1060,130')
  ];

  const zone = [[1290, 140], [1700, 140], [1700, 240], [1640, 330], [1632, 425],
    ...E('75,75 70,130 75,200 90,330 15,360 0,430'),
    ...S('740,150 660,150 555,190 500,230 500,340 550,440 510,480 410,525 370,570'), [1290, 760]];

  const green = [
    '530,290 560,270 640,270 665,350 650,390 560,395 525,350', '595,385 620,395 620,440 555,435',
    '440,470 480,440 600,440 610,500 560,540 500,550 420,540 410,520', '640,490 745,410 745,440 700,505',
    '685,520 795,500 795,540 700,545', '780,570 850,560 850,595 800,630',
    '780,650 820,650 860,620 910,640 930,740 910,775 945,800 940,880 950,950 880,1000 860,1060 780,1090 720,1140 670,1165 650,1198 555,1198 600,1130 640,1000 690,960 700,900 740,840 810,800 790,750 840,715',
    '450,740 550,740 570,820 640,820 640,900 560,930 590,940 650,930 660,980 630,1020 600,1110 540,1080 500,1140 430,1170 370,1198 400,1140 410,1070 450,1030 440,980 450,880',
    '410,560 430,560 430,600 410,610', '355,650 400,635 400,660 360,668', '690,590 730,560 730,575 690,605',
    '620,580 650,570 650,620', '660,245 710,245 700,290', '900,190 930,210 905,225', '800,360 835,325 830,355',
    '720,370 755,375 745,395', '345,965 400,940 400,975 370,990', '350,1040 400,1000 410,1010 350,1070', '870,245 895,275 880,275',
    '600,780 640,780 640,805 605,805', '530,640 520,680 505,675', '520,740 550,715 545,745', '710,1140 800,1185 790,1190 705,1165', '780,1120 840,1130 800,1140'
  ].map(N).concat([
    '370,40 400,0 440,0 440,20 410,60 370,90', '335,115 410,120 410,185 390,260 360,290 320,230 320,170',
    '340,260 400,280 430,330 390,360 400,320 370,290 340,300', '440,190 520,210 515,240 450,330 400,365 385,350 440,290',
    '505,95 520,30 620,0 610,70 570,130 540,140 530,175 545,190 515,165', '640,40 730,80 735,85 650,60', '660,90 690,90 730,140 700,135',
    '210,330 270,300 290,330 280,360 225,360', '190,370 230,380 220,430 185,430', '230,450 275,470 270,490 230,475',
    '270,390 320,400 320,440 290,435', '140,225 155,235 155,300 148,270', '90,290 110,290 105,320', '410,430 440,400 480,465 440,455',
    '470,35 490,40 485,70', '290,530 340,535 335,543 295,542'].map(S));
  const orange = [
    '550,270 600,230 630,240 635,310 600,355 540,330', '500,460 600,440 600,490 540,490', '840,290 880,280 875,320 840,315',
    '630,450 690,455 650,470', '885,640 915,640 920,740 895,740', '820,790 920,790 940,850 900,900 870,830 830,860', '480,760 510,760 505,800 485,800',
    '455,830 570,820 590,870 520,930 530,980 490,1000 455,920', '420,1060 450,1030 510,1010 520,1100 490,1120 430,1100',
    '640,1030 680,960 740,900 790,860 830,920 870,900 860,990 800,1060 740,1110 680,1150 610,1140', '560,1000 600,1000 600,1060 560,1050',
    '375,1180 440,1180 440,1198', '545,620 565,620 550,640', '380,530 400,530 395,548', '850,240 865,245 860,260', '540,750 560,770 560,795 545,790'
  ].map(N).concat([
    '345,70 365,70 365,105 345,110', '385,75 410,75 410,88', '370,150 400,150 380,210', '315,270 335,260 330,300 305,330',
    '440,250 460,250 460,320 420,320', '240,370 310,350 300,380 250,390', '205,430 260,430 250,450', '505,200 520,205 512,218'].map(S));
  const red = [
    '598,240 628,240 628,285 600,280', '580,315 615,320 600,335', '480,865 520,870 540,890 490,895', '500,910 520,930 520,975 505,975',
    '455,1020 510,1010 500,1040', '485,1075 510,1070 505,1120 485,1110', '815,800 845,820 840,855 815,850', '885,800 930,830 915,860 885,840',
    '855,890 900,890 880,930 850,940', '730,950 770,915 825,950 820,1000 760,985 740,1010', '655,1000 690,1010 700,1040 740,1020 680,1090 650,1090',
    '610,1110 640,1090 640,1130 610,1130', '780,1010 805,1010 800,1045 780,1045', '540,880 580,840 580,870', '912,650 928,650 924,705 915,705',
    '770,870 795,870 790,900 760,895', '540,420 555,425 550,445 538,440', '490,450 505,460 495,475', '625,465 640,465 632,478', '840,740 870,715 865,735', '720,1090 735,1090 730,1120'
  ].map(N).concat([
    '360,140 380,145 378,165 365,165', '280,350 305,350 300,380 280,375', '230,400 250,405 235,440 205,465 205,445',
    '438,225 450,228 448,250', '298,405 312,410 305,420', '675,82 690,88 680,95', '415,310 430,310 422,318'].map(S));

  const limits = [
    '632,80 625,140 640,200 665,240', '540,190 580,200 590,235 610,243 665,240 720,228 735,265 790,255 805,215 795,180 797,148 740,115 725,150',
    '800,180 850,215', '725,170 720,190 740,215 750,250', '703,262 703,368', '590,235 575,275 620,300 660,318 703,362 760,445 775,458 815,422 850,440 905,488 960,550 1035,575 1050,612 1095,640',
    '703,265 735,265 820,230 880,205 940,200 1015,195', '705,305 790,290 820,258 900,268', '1130,310 1080,320 1030,325 980,348 905,315 860,330',
    '790,290 850,310 865,370 830,385 818,422', '980,348 1000,360 1027,420 1092,340 1165,355', '980,348 965,425 930,460 905,488',
    '930,460 960,490 1020,500 1015,470 1027,420', '1020,500 1045,520 1065,505 1080,525 1125,550 1140,545',
    '525,230 540,290 565,330 568,380 625,440 700,500 760,550 765,565 735,570 680,552', '680,552 600,552', '600,552 565,480 550,440',
    '700,500 725,440 775,458', '510,480 520,510 545,540 580,550 580,580 620,595 690,630 780,655 835,660 865,658 890,620 935,605 945,580 985,570 1035,578',
    '615,648 680,628', '722,772 820,772', '820,772 880,850 905,858 925,862', '785,650 810,722 890,740 905,770 950,822 1000,760 1085,768',
    '905,610 905,675', '905,675 960,705 965,725 1010,712 1050,760', '905,770 905,858', '1087,625 1087,893', '1087,838 1203,838',
    '1095,640 1115,640 1110,700 1125,720 1160,705 1210,730 1218,715', '1140,598 1120,640', '1180,970 1150,970', '1150,970 1130,995 1105,998', '1105,998 1105,1070',
    '1165,430 1135,465 1142,500', '855,125 880,130 980,120 1015,130', '855,125 885,40 890,0', '740,85 860,90', '660,155 720,155 740,115', '500,330 530,380 565,385', '410,525 485,510 510,480', '1142,500 1142,598'
  ].map(S).concat([
    '208,350 208,615', '506,185 506,283', '210,370 290,372 325,350 410,348 430,315 505,283 550,263 632,290', '265,290 290,325 325,350',
    '75,200 120,185 180,175 250,172 325,170 370,198 424,195', '80,205 125,228 180,200 250,195 370,198 330,255 265,290 210,350 120,392 70,350 40,330',
    '70,130 100,118 165,118 183,137 235,130 262,137 300,122 375,135', '182,137 182,170', '262,137 258,172', '127,70 128,95 165,118', '80,105 128,95', '205,75 195,90 215,95 235,130',
    '80,240 150,265 200,278 265,280', '100,265 170,300 235,315', '90,330 150,310 210,335', '75,290 150,290', '120,392 70,415 60,460 40,545',
    '208,615 310,620 320,575 330,550 400,512 500,508 570,475 650,465', '500,508 550,535 430,600 430,612', '458,683 465,655 570,598 690,575',
    '430,612 385,635 350,660 290,665 270,692 228,655 285,630', '640,580 635,545 680,500', '80,688 145,708 185,700 270,695 345,700 335,745 390,735 420,690 458,683 520,678 505,715 585,718',
    '660,730 662,675 700,665', '735,775 752,778', '0,430 60,415', '10,340 20,400 70,415', '0,505 50,505', '335,745 370,770'
  ].map(E));
  const straight = [S('680,628 780,772'), E('430,612 458,683')];

  // Midpoint displacement gives rivers and coasts their ragged look.
  function rough(pts, k) {
    const out = [pts[0]];
    const split = (a, b) => {
      const dx = b[0] - a[0], dy = b[1] - a[1], len = Math.hypot(dx, dy);
      if (len < 2.5 || Math.abs(dx) < .01 || Math.abs(dy) < .01) { out.push(b); return; }
      const t = (rnd() - .5) * k * Math.min(1, 9 / len), m = [(a[0] + b[0]) / 2 - dy * t, (a[1] + b[1]) / 2 + dx * t];
      split(a, m); split(m, b);
    };
    for (let i = 1; i < pts.length; i++) split(pts[i - 1], pts[i]);
    return out;
  }
  const inside = (p, poly) => {
    let r = false;
    for (let i = 0, j = poly.length - 1; i < poly.length; j = i++) {
      const a = poly[i], b = poly[j];
      if ((a[1] > p[1]) !== (b[1] > p[1]) && p[0] < (b[0] - a[0]) * (p[1] - a[1]) / (b[1] - a[1]) + a[0]) r = !r;
    }
    return r;
  };
  const any = (p, list) => list.some(q => inside(p, q));
  const kind = p => any(p, red) ? 0 : any(p, orange) ? 1 : any(p, green) ? 2 : 3;
  const radius = [4.5, 5.5, 7.5, 13];
  const colour = ['#e57f84', '#fee3bf', '#e2f3d8', '#95bfdc'];

  // Unit seeds; each has its own stretch and direction so that units differ in shape.
  const seeds = [];
  const add = (p, c) => {
    const wide = p[0] < 1440 && p[1] > 360 ? 1.3 : 1;
    for (const s of seeds) if (Math.hypot(s.x - p[0], s.y - p[1]) < Math.min(radius[c], radius[s.c]) * wide) return;
    const a = rnd() * Math.PI, k = 1 + rnd() * .7;
    seeds.push({ x: p[0], y: p[1], c, ca: Math.cos(a), sa: Math.sin(a), k });
  };
  [red, orange, green].forEach((list, c) => list.forEach(q => {
    add([q.reduce((s, p) => s + p[0], 0) / q.length, q.reduce((s, p) => s + p[1], 0) / q.length], c);
  }));
  for (let i = 0; i < 24000; i++) {
    const p = [1310 + rnd() * 400, 180 + rnd() * 550];
    if (inside(p, zone) && inside(p, outline)) add(p, kind(p));
  }
  // A few units differ from their neighbours.
  seeds.forEach(s => {
    const r = rnd();
    s.fill = s.c === 0 && r < .12 ? 1 : s.c === 1 && r < .2 ? 2 : s.c === 1 && r > .86 ? 0 : s.c === 2 && r < .12 ? 1 : s.c === 2 && r > .88 ? 3 : s.c;
  });

  // Fine jittered lattice; every atom joins the unit that claims it.
  const step = 3, x0 = 1308, y0 = 176, cols = 144, rows = 190, atoms = [];
  for (let j = 0; j < rows; j++) for (let i = 0; i < cols; i++) {
    const p = [x0 + (i + .1 + rnd() * .8) * step, y0 + (j + .1 + rnd() * .8) * step];
    const c = kind(p), wx = p[0] + 1.5 * Math.sin(p[1] * .45), wy = p[1] + 1.5 * Math.sin(p[0] * .4);
    let best = 1e9, u = -1;
    seeds.forEach((s, n) => {
      const dx = wx - s.x, dy = wy - s.y;
      if (Math.abs(dx) > 45 || Math.abs(dy) > 45) return;
      const a = (dx * s.ca + dy * s.sa) / s.k, b = (dy * s.ca - dx * s.sa) * s.k;
      const q = (a * a + b * b) * (s.c === c ? 1 : 5);
      if (q < best) { best = q; u = n; }
    });
    atoms.push({ p, u });
  }
  const fills = ['', '', '', ''];
  let borders = '';
  const f1 = v => v.toFixed(1);
  for (let j = 2; j < rows - 2; j++) for (let i = 2; i < cols - 2; i++) {
    const me = atoms[j * cols + i], s = me.p;
    if (me.u < 0) continue;
    let poly = [[s[0] - 8, s[1] - 8, -1], [s[0] + 8, s[1] - 8, -1], [s[0] + 8, s[1] + 8, -1], [s[0] - 8, s[1] + 8, -1]];
    for (let b = -2; b <= 2; b++) for (let a = -2; a <= 2; a++) {
      if (!a && !b) continue;
      const id = (j + b) * cols + i + a, t = atoms[id].p, dx = t[0] - s[0], dy = t[1] - s[1];
      const m = (t[0] * t[0] + t[1] * t[1] - s[0] * s[0] - s[1] * s[1]) / 2;
      const f = p => p[0] * dx + p[1] * dy - m, next = [];
      for (let n = 0; n < poly.length; n++) {
        const A = poly[n], B = poly[(n + 1) % poly.length], fa = f(A), fb = f(B);
        if (fa <= 0) next.push(A);
        if ((fa <= 0) !== (fb <= 0)) {
          const k = fa / (fa - fb);
          next.push([A[0] + (B[0] - A[0]) * k, A[1] + (B[1] - A[1]) * k, fa <= 0 ? id : A[2]]);
        }
      }
      poly = next;
    }
    const col = seeds[me.u].fill;
    if (col < 3) fills[col] += 'M' + poly.map(p => f1(p[0]) + ' ' + f1(p[1])).join('L') + 'Z';
    poly.forEach((A, n) => {
      const B = poly[(n + 1) % poly.length];
      if (A[2] > j * cols + i && atoms[A[2]].u !== me.u) borders += `M${f1(A[0])} ${f1(A[1])}L${f1(B[0])} ${f1(B[1])}`;
    });
  }

  const d = (pts, close) => 'M' + pts.map(p => f1(p[0]) + ' ' + f1(p[1])).join('L') + (close ? 'Z' : '');
  const edge = d(rough(outline, .5), true);
  const areas = [2, 1, 0].map(c => `<path d="${fills[c]}" fill="${colour[c]}" stroke="${colour[c]}" stroke-width=".5"/>`).join('');
  const lines = limits.map(l => d(rough(l, .8))).concat(straight.map(l => d(l))).join('');

  svg.innerHTML = `<defs><clipPath id="land"><path d="${edge}"/></clipPath><clipPath id="zone"><path d="${d(zone, true)}"/></clipPath></defs>
    <g stroke="#969696" stroke-linejoin="round" stroke-linecap="round" fill="none">
    <path d="${edge}" fill="${colour[3]}"/>
    <g clip-path="url(#land)"><g clip-path="url(#zone)">${areas}<path d="${borders}" stroke-width=".9"/></g><path d="${d(rough(zone.slice(5, -1), .8))}"/><path d="${lines}"/></g>
    <path d="${edge}"/>
    <path d="M1223 138l1 4M1207 178l1-5" stroke="#888"/></g>`;
})();
```
